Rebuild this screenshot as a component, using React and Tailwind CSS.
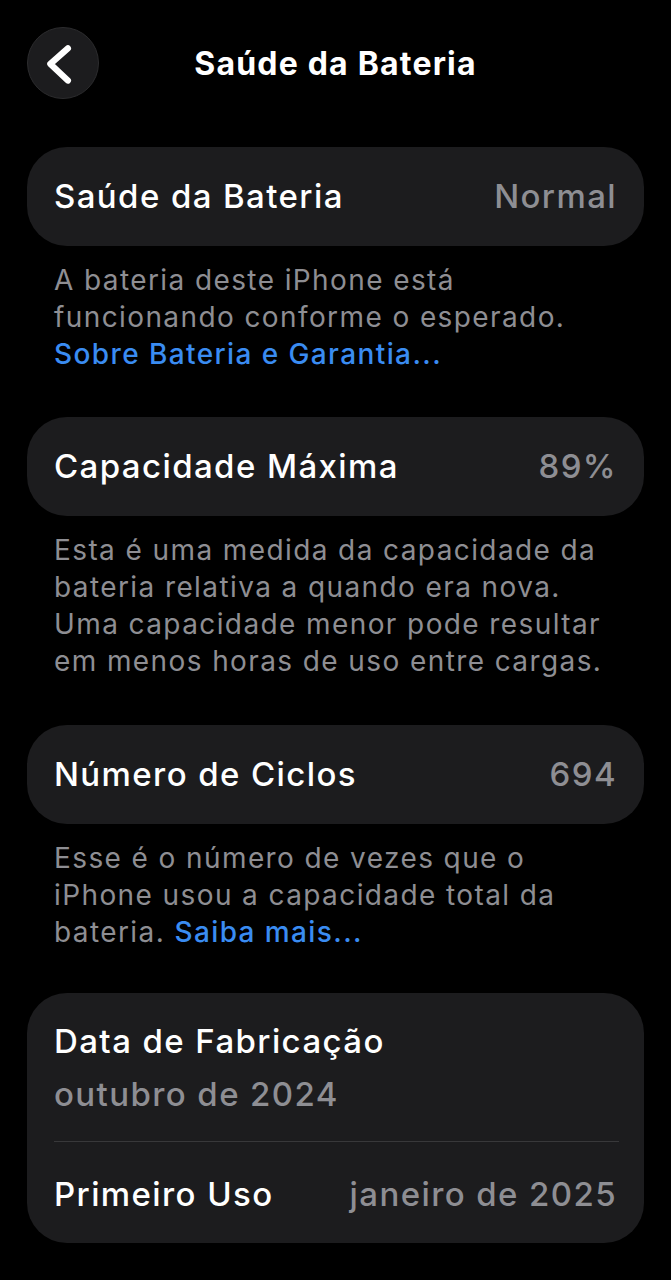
import React from "react";

const font = { fontFamily: "Inter, 'Noto Sans', sans-serif" };

const Row = ({ label, value }) => (
  <div className="flex items-center justify-between h-[99px] px-[27px] rounded-[40px] bg-[#1c1c1e]">
    <span className="text-[33px] font-medium text-white tracking-[1.4px]">{label}</span>
    <span className="text-[33px] font-medium text-[#8e8e93] tracking-[1.4px]">{value}</span>
  </div>
);

const Footer = ({ children }) => (
  <p className="pl-[27px] pr-[20px] pt-[16px] text-[28px] leading-[37px] text-[#8e8e93] tracking-[1.4px]">
    {children}
  </p>
);

const App = () => {
  return (
    <div className="min-h-[1280px] bg-black px-[27px]" style={font}>
      {/* Header */}
      <div className="relative flex items-center justify-center h-[127px]">
        <button className="absolute left-0 top-[27px] w-[72px] h-[72px] rounded-full bg-[#1c1c1e] border border-[#2c2c2e] flex items-center justify-center">
          <svg width="72" height="72" viewBox="0 0 72 72">
            <path
              d="M41 21 L23 37 L41 54"
              fill="none"
              stroke="white"
              strokeWidth="6.5"
              strokeLinecap="round"
              strokeLinejoin="round"
            />
          </svg>
        </button>
        <h1 className="text-[32px] font-bold text-white tracking-[1.2px]">Saúde da Bateria</h1>
      </div>

      <div className="pt-[20px]">
        <Row label="Saúde da Bateria" value="Normal" />
        <Footer>
          A bateria deste iPhone está funcionando conforme o esperado.{" "}
          <span className="text-[#3a8cf2] font-medium">Sobre Bateria e Garantia...</span>
        </Footer>
      </div>

      <div className="pt-[44px]">
        <Row label="Capacidade Máxima" value="89%" />
        <Footer>
          Esta é uma medida da capacidade da bateria relativa a quando era nova. Uma capacidade menor
          pode resultar em menos horas de uso entre cargas.
        </Footer>
      </div>

      <div className="pt-[45px]">
        <Row label="Número de Ciclos" value="694" />
        <Footer>
          Esse é o número de vezes que o iPhone usou a capacidade total da bateria.{" "}
          <span className="text-[#3a8cf2] font-medium">Saiba mais...</span>
        </Footer>
      </div>

      <div className="pt-[42px]">
        <div className="rounded-[40px] bg-[#1c1c1e] pl-[27px]">
          <div className="pt-[26px] pb-[25px] pr-[27px]">
            <div className="text-[33px] font-medium leading-[44px] text-white tracking-[1.4px]">Data de Fabricação</div>
            <div className="text-[33px] font-medium leading-[44px] mt-[9px] text-[#8e8e93] tracking-[1.4px]">outubro de 2024</div>
          </div>
          <div className="h-px bg-[#38383a] mr-[25px]"></div>
          <div className="flex items-center justify-between h-[101px] pt-[4px] pr-[27px]">
            <span className="text-[33px] font-medium text-white tracking-[1.4px]">Primeiro Uso</span>
            <span className="text-[33px] font-medium text-[#8e8e93] tracking-[1.4px]">janeiro de 2025</span>
          </div>
        </div>
      </div>
    </div>
  );
};

export default App;
